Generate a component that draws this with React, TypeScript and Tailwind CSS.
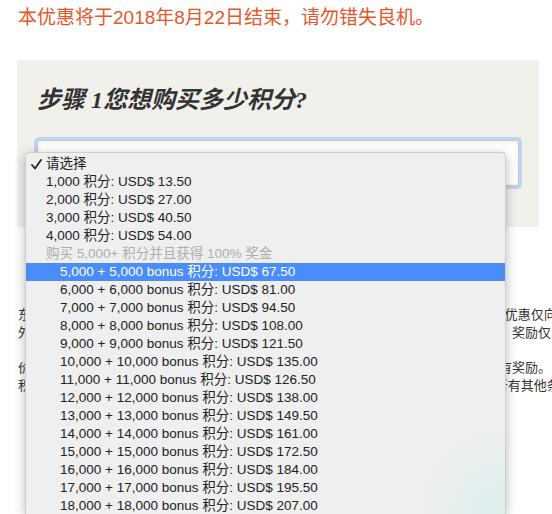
import React from "react";

const sans = "font-['Liberation_Sans','Noto_Sans_CJK_SC',sans-serif]";

const baseItems = [
  "1,000 积分: USD$ 13.50",
  "2,000 积分: USD$ 27.00",
  "3,000 积分: USD$ 40.50",
  "4,000 积分: USD$ 54.00",
];

const bonusItems = [
  ["5,000", "67.50"],
  ["6,000", "81.00"],
  ["7,000", "94.50"],
  ["8,000", "108.00"],
  ["9,000", "121.50"],
  ["10,000", "135.00"],
  ["11,000", "126.50"],
  ["12,000", "138.00"],
  ["13,000", "149.50"],
  ["14,000", "161.00"],
  ["15,000", "172.50"],
  ["16,000", "184.00"],
  ["17,000", "195.50"],
  ["18,000", "207.00"],
];

const paragraphs = [
  [
    "东方航空万里行会员在2018年8月22日前购买积分即可获得100%奖励积分，所有本次优惠仅向东方万里行会员开放。",
    "外奖励积分。购买的积分及奖励积分将在交易完成后的两个工作日内存入您的账户中，奖励仅限本次活动使用。",
  ],
  [
    "价格以美元计算，每个账户每日最多可购买一万积分，超限的订单将被取消并退还所有奖励。",
    "积分购买一经完成概不退款，积分有效期为365天。本优惠受计划条款约束，并适用所有其他条件。",
  ],
];

export default function App() {
  return (
    <div className={`relative w-[552px] h-[514px] overflow-hidden bg-white ${sans}`}>
      <div className="w-[600px] px-[17px]">
        <p className="ml-px mt-[5px] text-[19px] leading-[26px] text-[#e5572b] whitespace-nowrap">
          本优惠将于2018年8月22日结束，请勿错失良机。
        </p>

        {/* step panel */}
        <div className="mt-[29px] w-[522px] h-[167px] bg-[#f2f0eb] px-[17px] pt-[24px]">
          <h2 className="ml-[3px] text-[24px] leading-[32px] font-bold italic text-[#333] whitespace-nowrap font-['Liberation_Serif','Noto_Sans_CJK_SC',serif]">
            步骤 1您想购买多少积分?
          </h2>
          <div className="mt-[21px] h-[52px] rounded-[5px] bg-[#b9d6f4] p-[3px]">
            <div className="h-full rounded-[2px] border border-[#c9c9c9] bg-white shadow-[inset_0_2px_4px_rgba(0,0,0,0.07)]" />
          </div>
        </div>

        {/* terms text */}
        <div className="mt-[79px] ml-px text-[13px] leading-[18px] text-[#333]">
          {paragraphs.map((lines, i) => (
            <div key={i} className={i > 0 ? "mt-[17px]" : ""}>
              {lines.map((l) => (
                <div key={l} className="whitespace-nowrap">
                  {l}
                </div>
              ))}
            </div>
          ))}
        </div>
      </div>

      {/* open select menu */}
      <div className="absolute left-[25px] top-[152px] w-[481px] h-[362px] overflow-hidden rounded-t-[5px] border border-b-0 border-[#cdcdcd] bg-[#efefef] pt-[2px] text-[13.5px] leading-[18px] text-[#222] shadow-[0_3px_12px_rgba(0,0,0,0.28)]">
        <div className="pointer-events-none absolute inset-0 bg-[radial-gradient(circle_at_100%_100%,#dbeeee_0px,rgba(239,239,239,0)_90px)]" />
        <div className="relative">
          <div className="flex h-[18px] items-center">
            <span className="flex w-[20px] justify-center pl-[1px]">
              <svg width="11" height="11" viewBox="0 0 11 11">
                <path d="M1 6 L4 9.5 L10 1" fill="none" stroke="#222" strokeWidth="1.8" strokeLinecap="round" strokeLinejoin="round" />
              </svg>
            </span>
            <span>请选择</span>
          </div>
          {baseItems.map((t) => (
            <div key={t} className="flex h-[18px] items-center pl-[20px] whitespace-nowrap">
              {t}
            </div>
          ))}
          <div className="flex h-[18px] items-center pl-[20px] text-[#adadad] whitespace-nowrap">
            购买 5,000+ 积分并且获得 100% 奖金
          </div>
          {bonusItems.map(([n, price], i) => (
            <div
              key={n}
              className={`flex h-[18px] items-center pl-[34px] whitespace-nowrap ${
                i === 0 ? "bg-[#4b8df8] text-white" : ""
              }`}
            >
              {n} + {n} bonus 积分: USD$ {price}
            </div>
          ))}
        </div>
      </div>
    </div>
  );
}
